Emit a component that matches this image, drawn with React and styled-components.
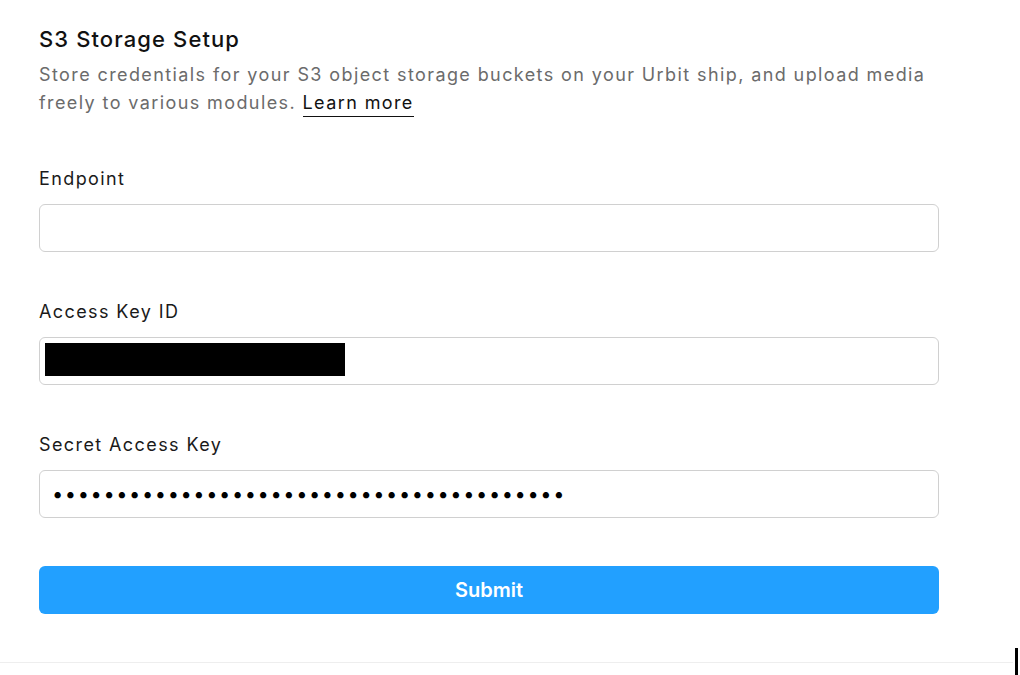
import React from "react";
import styled, { createGlobalStyle } from "styled-components";

const Global = createGlobalStyle`
  html, body { margin: 0; padding: 0; background: #fff; }
  body { font-family: Inter, "Noto Sans", sans-serif; color: #1a1a1a; }
  * { box-sizing: border-box; }
`;

const Page = styled.div`
  position: relative;
  width: 1020px;
  height: 675px;
  overflow: hidden;
`;

const Content = styled.div`
  width: 939px;
  padding: 26px 0 0 39px;
  display: flex;
  flex-direction: column;
`;

const Title = styled.h1`
  margin: 0;
  font-size: 22px;
  line-height: 26px;
  font-weight: 500;
  letter-spacing: 1.1px;
  color: #111;
`;

const Description = styled.p`
  margin: 9px 0 0;
  font-size: 18px;
  line-height: 28px;
  letter-spacing: 1.4px;
  color: #6b6b6b;
`;

const LearnMore = styled.a`
  color: #111;
  text-decoration: none;
  border-bottom: 1px solid #111;
  padding-bottom: 3px;
`;

const Form = styled.form`
  margin-top: 48px;
  display: flex;
  flex-direction: column;
  gap: 46px;
`;

const Field = styled.div`
  display: flex;
  flex-direction: column;
  gap: 11px;
`;

const Label = styled.label`
  font-size: 18px;
  line-height: 28px;
  letter-spacing: 1.4px;
  color: #1a1a1a;
`;

const InputWrap = styled.div`
  position: relative;
  height: 48px;
`;

const Input = styled.input`
  width: 100%;
  height: 48px;
  border: 1px solid #d0d0d0;
  border-radius: 6px;
  padding: 0 12px;
  font-family: Inter, "Noto Sans", sans-serif;
  font-size: ${(p) => (p.type === "password" ? "20px" : "16px")};
  letter-spacing: ${(p) => (p.type === "password" ? "1.6px" : "normal")};
  color: #000;
  background: #fff;
  outline: none;
`;

const Redaction = styled.div`
  position: absolute;
  left: 6px;
  top: 6px;
  width: 300px;
  height: 33px;
  background: #000;
`;

const Button = styled.button`
  margin-top: 2px;
  height: 48px;
  border: none;
  border-radius: 6px;
  background: #22a0ff;
  color: #fff;
  font-family: Inter, "Noto Sans", sans-serif;
  font-size: 20px;
  font-weight: 600;
  cursor: pointer;
`;

const Footer = styled.div`
  margin-top: 48px;
  width: 1013px;
  border-top: 1px solid #eeeeee;
`;

const Caret = styled.div`
  position: absolute;
  left: 1015px;
  top: 648px;
  width: 3px;
  height: 27px;
  background: #000;
`;

export default function App() {
  return (
    <Page>
      <Global />
      <Content>
        <Title>S3 Storage Setup</Title>
        <Description>
          Store credentials for your S3 object storage buckets on your Urbit ship, and upload media
          freely to various modules. <LearnMore href="#">Learn more</LearnMore>
        </Description>
        <Form onSubmit={(e) => e.preventDefault()}>
          <Field>
            <Label>Endpoint</Label>
            <InputWrap>
              <Input type="text" readOnly value="" />
            </InputWrap>
          </Field>
          <Field>
            <Label>Access Key ID</Label>
            <InputWrap>
              <Input type="text" readOnly value="" />
              <Redaction />
            </InputWrap>
          </Field>
          <Field>
            <Label>Secret Access Key</Label>
            <InputWrap>
              <Input type="password" readOnly value={"x".repeat(40)} />
            </InputWrap>
          </Field>
          <Button type="submit">Submit</Button>
        </Form>
      </Content>
      <Footer />
      <Caret />
    </Page>
  );
}
